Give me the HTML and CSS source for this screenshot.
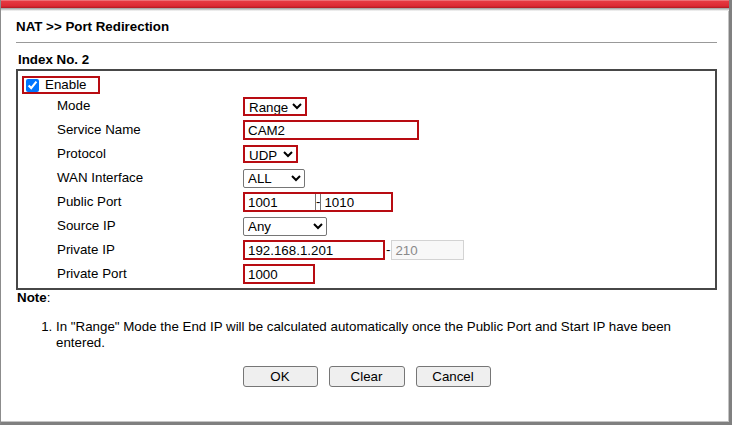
FILE: index.html
```html
<!DOCTYPE html>
<html>
 <head>
  <meta charset="utf-8">
  <title>NAT Port Redirection</title>
  <meta name="viewport" content="width=device-width, initial-scale=1.0">
  <link rel="stylesheet" href="styles.css">
 </head>

<body>

<div class="window">
  <div class="topbar"></div>

  <div class="page">
    <h1 class="title">NAT &gt;&gt; Port Redirection</h1>
    <hr class="rule">
    <h2 class="index">Index No. 2</h2>

    <div class="panel">
      <label class="enable"><input type="checkbox" checked>Enable</label>

      <div class="row">
        <span class="lbl">Mode</span>
        <select class="sel hl w-mode"><option>Range</option></select>
      </div>

      <div class="row">
        <span class="lbl">Service Name</span>
        <input class="txt hl w-name" type="text" value="CAM2">
      </div>

      <div class="row">
        <span class="lbl">Protocol</span>
        <select class="sel hl w-proto"><option>UDP</option></select>
      </div>

      <div class="row">
        <span class="lbl">WAN Interface</span>
        <select class="sel w-wan"><option>ALL</option></select>
      </div>

      <div class="row">
        <span class="lbl">Public Port</span>
        <span class="pair hl">
          <input class="part part-a" type="text" value="1001"><span class="dash-in">-</span><input class="part part-b" type="text" value="1010">
        </span>
      </div>

      <div class="row">
        <span class="lbl">Source IP</span>
        <select class="sel w-src"><option>Any</option></select>
      </div>

      <div class="row">
        <span class="lbl">Private IP</span>
        <input class="txt hl w-ip" type="text" value="192.168.1.201">
        <span class="dash">-</span>
        <input class="txt off w-end" type="text" value="210" disabled>
      </div>

      <div class="row">
        <span class="lbl">Private Port</span>
        <input class="txt hl w-port" type="text" value="1000">
      </div>
    </div>

    <div class="note"><b>Note</b>:</div>
    <ol class="notes">
      <li>In "Range" Mode the End IP will be calculated automatically once the Public Port and Start IP have been entered.</li>
    </ol>

    <div class="buttons">
      <button type="button" class="btn">OK</button>
      <button type="button" class="btn btn-wide">Clear</button>
      <button type="button" class="btn">Cancel</button>
    </div>
  </div>
</div>

</body>
</html>
```

FILE: styles.css
```css
* {
  box-sizing: border-box;
}

body {
  margin: 0;
  font-family: "Liberation Sans", Arial, Helvetica, sans-serif;
  font-size: 13.33px;
  color: #000;
  background: #fff;
}

/* window frame round the page */
.window {
  width: 732px;
  height: 425px;
  border-left: 1px solid #8c8c8c;
  border-right: 3px solid #808080;
  border-bottom: 3px solid #808080;
  box-shadow: inset -1px -1px 0 #c4c4c4;
}

.topbar {
  height: 11px;
  background: linear-gradient(#f4a3a6 0, #e63a42 1px, #dc2a33 6px, #b01820 8px, #9a9a9a 8px, #d8d8d8 10px, #fff 11px);
}

.page {
  padding: 8px 12px 0 15px;
  line-height: 16px;
}

.title {
  margin: 0 0 7px;
  font-size: 13.33px;
  line-height: 16px;
  font-weight: bold;
}

.rule {
  margin: 0;
  border: 0;
  border-top: 1px solid #999;
}

.index {
  margin: 9px 0 1px;
  padding-left: 2px;
  font-size: 13.33px;
  line-height: 16px;
  font-weight: bold;
}

/* Style the form box */
.panel {
  border: 2px solid #474747;
  padding-bottom: 2px;
}

.enable {
  display: flex;
  align-items: center;
  width: 78px;
  height: 18px;
  margin: 5px 0 0 4px;
  border: 2px solid #b80c12;
}

.enable input {
  width: 13px;
  height: 13px;
  margin: 0 6px 0 2px;
}

.row {
  display: flex;
  align-items: center;
  height: 24px;
}

.lbl {
  width: 225px;
  padding-left: 39px;
}

.sel,
.txt,
.part {
  font-family: "Liberation Sans", Arial, Helvetica, sans-serif;
  font-size: 13.33px;
  color: #000;
  margin: 0;
}

.sel {
  height: 19px;
  padding: 0;
  border: 1px solid #767676;
  border-radius: 2px;
  background-color: #fff;
}

.txt {
  height: 20px;
  padding: 0 3px;
  border: 1px solid #767676;
}

.hl {
  border: 2px solid #b80c12;
  border-radius: 0;
}

.w-mode { width: 64px; }
.w-name { width: 176px; }
.w-proto { width: 55px; height: 18px; }
.w-wan { width: 62px; }
.w-src { width: 84px; }
.w-ip { width: 142px; }
.w-port { width: 72px; }

.pair {
  display: flex;
  align-items: center;
  width: 150px;
  height: 20px;
}

.part {
  height: 16px;
  border: 0;
  padding: 0 0 0 3px;
}

.part-a {
  width: 71px;
  border-right: 1px solid #767676;
}

.part-b {
  flex: 1;
  min-width: 0;
  width: auto;
  border-left: 1px solid #767676;
}

.dash-in {
  flex: none;
}

.dash {
  padding: 0 1px;
}

.off {
  width: 73px;
  border: 1px solid #d3d3d3;
  background: #f8f8f8;
  color: #8a8a8a;
}

.note {
  padding-left: 1px;
}

.notes {
  margin: 13px 0 0;
  padding-left: 40px;
}

.buttons {
  display: flex;
  justify-content: center;
  gap: 11px;
  margin-top: 15px;
}

.btn {
  width: 75px;
  height: 21px;
  padding: 0;
  font-family: "Liberation Sans", Arial, Helvetica, sans-serif;
  font-size: 13.33px;
  color: #000;
  background: #efefef;
  border: 1px solid #767676;
  border-radius: 3px;
}

.btn-wide {
  width: 76px;
}
```
